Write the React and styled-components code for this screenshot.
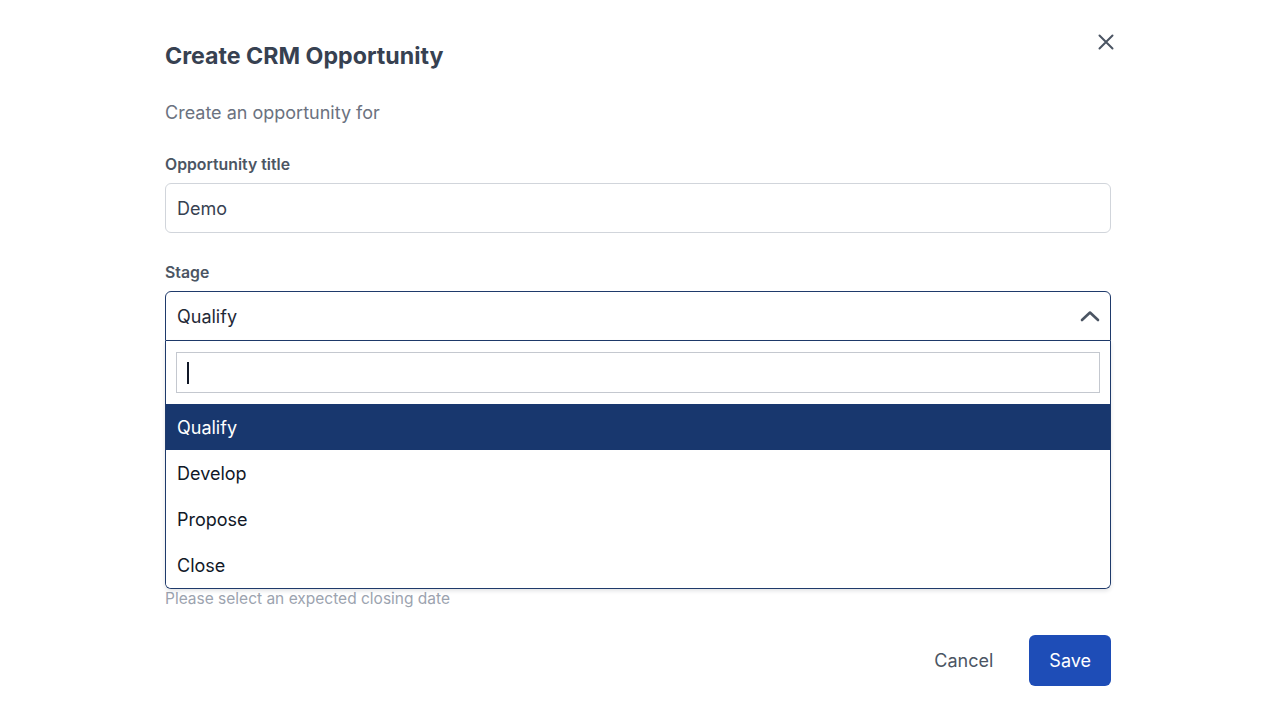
import React from "react";
import styled, { createGlobalStyle } from "styled-components";

const Global = createGlobalStyle`
  * { box-sizing: border-box; }
  html, body { margin: 0; padding: 0; background: #ffffff; }
  body { font-family: Inter, "Noto Sans", "Liberation Sans", sans-serif; -webkit-font-smoothing: antialiased; }
`;

const Page = styled.div`
  width: 1280px;
  height: 720px;
  padding: 40px 0 0 165px;
  overflow: hidden;
`;

const Modal = styled.div`
  width: 946px;
  display: flex;
  flex-direction: column;
`;

const Header = styled.div`
  display: flex;
  justify-content: space-between;
  align-items: flex-start;
`;

const Title = styled.h2`
  margin: 0;
  font-size: 23.2px;
  line-height: 32px;
  font-weight: 700;
  color: #374151;
`;

const CloseButton = styled.button`
  width: 20px;
  height: 20px;
  margin-top: -8px;
  margin-right: -5px;
  padding: 0;
  border: none;
  background: transparent;
  display: flex;
  align-items: center;
  justify-content: center;
  color: #4b5563;
  cursor: pointer;
`;

const Subtitle = styled.p`
  margin: 29px 0 0;
  font-size: 18px;
  line-height: 24px;
  color: #6b7280;
`;

const Field = styled.div`
  margin-top: 30px;
  display: flex;
  flex-direction: column;
  position: relative;
`;

const Label = styled.label`
  font-size: 15.8px;
  line-height: 20px;
  font-weight: 600;
  color: #4b5563;
  margin-bottom: 8px;
`;

const TextInput = styled.div`
  height: 50px;
  border: 1px solid #d1d5db;
  border-radius: 6px;
  padding: 0 11px;
  display: flex;
  align-items: center;
  font-size: 18px;
  color: #374151;
`;

const SelectWrap = styled.div`
  position: relative;
`;

const Trigger = styled.div`
  height: 50px;
  border: 1px solid #1f3a6b;
  border-radius: 6px 6px 0 0;
  padding: 0 10px 0 11px;
  display: flex;
  align-items: center;
  justify-content: space-between;
  font-size: 18px;
  color: #1f2937;
`;

const Panel = styled.div`
  position: absolute;
  top: 100%;
  left: 0;
  right: 0;
  background: #ffffff;
  border: 1px solid #1f3a6b;
  border-top: none;
  border-radius: 0 0 6px 6px;
  box-shadow: 0 2px 4px rgba(15, 23, 42, 0.12);
  z-index: 10;
  overflow: hidden;
`;

const SearchRow = styled.div`
  padding: 11px 10px;
`;

const SearchBox = styled.div`
  height: 41px;
  border: 1px solid #c4c8cf;
  display: flex;
  align-items: center;
  padding-left: 10px;
`;

const Caret = styled.span`
  display: block;
  width: 1.5px;
  height: 22px;
  background: #111827;
`;

const Option = styled.div`
  height: 46px;
  padding: 0 11px;
  display: flex;
  align-items: center;
  font-size: 18px;
  color: ${(p) => (p.$active ? "#ffffff" : "#111827")};
  background: ${(p) => (p.$active ? "#18376e" : "#ffffff")};
`;

const Helper = styled.div`
  margin-top: ${(p) => p.$offset || "8px"};
  font-size: 15.5px;
  line-height: 20px;
  color: #9ca3af;
`;

const Footer = styled.div`
  margin-top: 26px;
  display: flex;
  justify-content: flex-end;
  align-items: center;
  gap: 18px;
`;

const Button = styled.button`
  height: 51px;
  padding: 0 ${(p) => (p.$primary ? "20px" : "18px")};
  border: none;
  border-radius: 6px;
  font-family: inherit;
  font-size: 18px;
  color: ${(p) => (p.$primary ? "#ffffff" : "#4b5563")};
  background: ${(p) => (p.$primary ? "#1e4db7" : "transparent")};
  cursor: pointer;
`;

const stages = ["Qualify", "Develop", "Propose", "Close"];

export default function App() {
  return (
    <>
      <Global />
      <Page>
        <Modal>
          <Header>
            <Title>Create CRM Opportunity</Title>
            <CloseButton aria-label="Close">
              <svg width="18" height="18" viewBox="0 0 18 18" fill="none">
                <path d="M2.5 2.5 L15.5 15.5 M15.5 2.5 L2.5 15.5" stroke="currentColor" strokeWidth="2" strokeLinecap="round" />
              </svg>
            </CloseButton>
          </Header>
          <Subtitle>Create an opportunity for</Subtitle>

          <Field>
            <Label>Opportunity title</Label>
            <TextInput>Demo</TextInput>
          </Field>

          <Field>
            <Label>Stage</Label>
            <SelectWrap>
              <Trigger>
                <span>Qualify</span>
                <svg width="20" height="12" viewBox="0 0 20 12" fill="none">
                  <path d="M2 10 L10 2.5 L18 10" stroke="#4b5563" strokeWidth="2.6" strokeLinecap="round" strokeLinejoin="round" />
                </svg>
              </Trigger>
              <Panel>
                <SearchRow>
                  <SearchBox>
                    <Caret />
                  </SearchBox>
                </SearchRow>
                {stages.map((s) => (
                  <Option key={s} $active={s === "Qualify"}>
                    {s}
                  </Option>
                ))}
              </Panel>
            </SelectWrap>
          </Field>

          <Field>
            <Label>Expected close date</Label>
            <TextInput />
            <Helper $offset="140px">Please select an expected closing date</Helper>
          </Field>

          <Footer>
            <Button>Cancel</Button>
            <Button $primary>Save</Button>
          </Footer>
        </Modal>
      </Page>
    </>
  );
}
